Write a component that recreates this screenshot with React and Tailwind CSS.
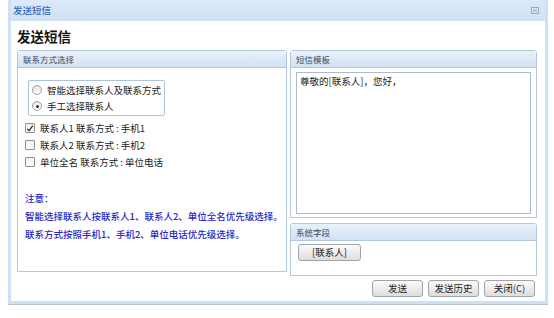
import React from "react";

const font = { fontFamily: '"Noto Sans CJK SC", "Noto Sans", sans-serif' };

function Panel({ title, className = "", children }) {
  return (
    <div className={"flex flex-col border border-[#b4c6dc] rounded-t-[3px] bg-white " + className}>
      <div className="h-[17px] flex items-center pl-[5px] text-[8.5px] text-[#3b4a5e] bg-gradient-to-b from-[#eaf1fa] to-[#d3e1f2] border-b border-[#b4c6dc]">
        {title}
      </div>
      {children}
    </div>
  );
}

function Btn({ children, className = "" }) {
  return (
    <div className={"h-[17px] flex items-center justify-center rounded-[3px] border border-[#9fa4ab] bg-gradient-to-b from-[#fbfbfb] to-[#dedede] text-[9.5px] text-[#222] " + className}>
      {children}
    </div>
  );
}

function Checkbox({ checked }) {
  return (
    <div className="w-[10px] h-[10px] border border-[#8e8f8f] rounded-[1px] bg-gradient-to-b from-[#f2f2f2] to-white flex items-center justify-center">
      {checked && (
        <svg width="9" height="9" viewBox="0 0 9 9">
          <path d="M1.5 4.8 L3.5 7 L7.6 1.2" stroke="#333" strokeWidth="1.4" fill="none" />
        </svg>
      )}
    </div>
  );
}

function Radio({ checked }) {
  return (
    <div className="w-[10px] h-[10px] rounded-full border border-[#9aa0a6] bg-gradient-to-b from-[#e6e6e6] to-white flex items-center justify-center">
      {checked && <div className="w-[3px] h-[3px] rounded-full bg-[#333]" />}
    </div>
  );
}

export default function App() {
  return (
    <div className="w-[554px] h-[318px] bg-white" style={font}>
      <div className="ml-[8px] w-[540px] h-[305px] bg-[#cfe0f4] flex flex-col px-[3px] pb-[3px] border-b border-[#b8c4d0]">
        <div className="h-[21px] flex items-center justify-between pl-[2px] pr-[6px] bg-gradient-to-b from-[#dde9f7] to-[#d0e1f4]">
          <span className="text-[9.5px] text-[#2f64b8] font-medium">发送短信</span>
          <svg width="8" height="7" viewBox="0 0 8 7">
            <rect x="0.5" y="0.5" width="7" height="6" fill="none" stroke="#9aa7b6" />
            <path d="M2 2 L6 5 M6 2 L2 5" stroke="#9aa7b6" strokeWidth="0.8" />
          </svg>
        </div>
        <div className="flex-1 bg-white flex flex-col pl-[6px] pr-[6px]">
          <div className="h-[29px] flex items-center pt-[2px] text-[13.5px] font-bold text-[#111]">发送短信</div>
          <div className="flex gap-[3px]">
            <Panel title="联系方式选择" className="w-[270px] h-[222px]">
              <div className="pl-[10px] pt-[12px] flex flex-col">
                <div className="w-[137px] h-[36px] border border-[#aec3da] rounded-[2px] flex flex-col justify-center gap-[2px] pl-[3px] text-[9.5px] text-[#222]">
                  <div className="flex items-center gap-[5px]"><Radio /><span>智能选择联系人及联系方式</span></div>
                  <div className="flex items-center gap-[5px]"><Radio checked /><span>手工选择联系人</span></div>
                </div>
                <div className="flex flex-col gap-[5px] mt-[6px] -ml-[3px] text-[9.5px] text-[#222]">
                  <div className="flex items-center gap-[5px] h-[12px]"><Checkbox checked /><span>联系人1 联系方式 : 手机1</span></div>
                  <div className="flex items-center gap-[5px] h-[12px]"><Checkbox /><span>联系人2 联系方式 : 手机2</span></div>
                  <div className="flex items-center gap-[5px] h-[12px]"><Checkbox /><span>单位全名 联系方式 : 单位电话</span></div>
                </div>
                <div className="mt-[24px] -ml-[3px] flex flex-col gap-[5px] text-[9.5px] font-medium text-[#2626c9] leading-[13px]">
                  <span>注意：</span>
                  <span className="whitespace-nowrap">智能选择联系人按联系人1、联系人2、单位全名优先级选择。</span>
                  <span>联系方式按照手机1、手机2、单位电话优先级选择。</span>
                </div>
              </div>
            </Panel>
            <div className="flex flex-col w-[247px]">
              <Panel title="短信模板" className="h-[168px]">
                <div className="flex-1 p-[5px] pt-[4px] pb-[3px]">
                  <div className="h-full border border-[#a9bccf] px-[3px] pt-[1px] text-[9.5px] text-[#222]">
                    尊敬的[联系人]，您好，
                  </div>
                </div>
              </Panel>
              <Panel title="系统字段" className="h-[53px] mt-[5px]">
                <div className="pl-[7px] pt-[3px]">
                  <Btn className="w-[63px]">[联系人]</Btn>
                </div>
              </Panel>
            </div>
          </div>
          <div className="flex justify-end gap-[5px] mt-[4px] pr-[4px]">
            <Btn className="w-[51px]">发送</Btn>
            <Btn className="w-[51px]">发送历史</Btn>
            <Btn className="w-[51px]">关闭(C)</Btn>
          </div>
        </div>
      </div>
    </div>
  );
}
